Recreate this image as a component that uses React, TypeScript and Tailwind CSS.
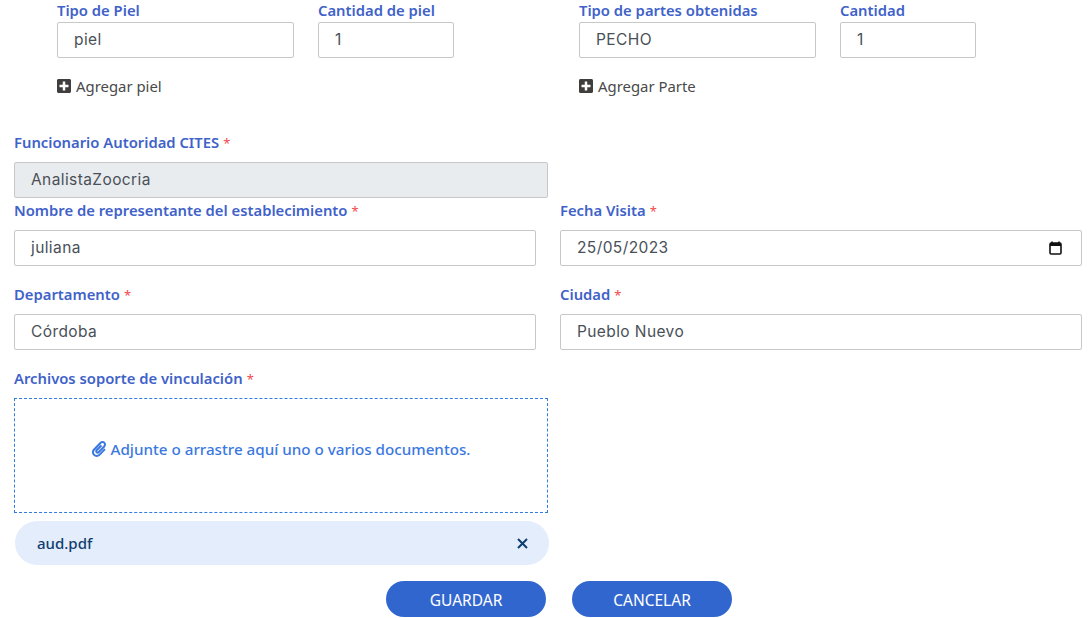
import { FaPaperclip, FaPlusSquare } from "react-icons/fa";

const labelFont = "block font-['Noto_Sans',sans-serif] text-[14.8px] font-semibold leading-5 text-[#3f62c9]";
const valueFont = "font-['Inter',sans-serif] text-[15.5px] tracking-[0.4px] text-[#495057]";

function Star() {
  return <span className="ml-1 text-[13px] font-normal leading-none text-[#f0484d]">*</span>;
}

function Box({ value, className = "", disabled = false, children }: { value: string; className?: string; disabled?: boolean; children?: React.ReactNode }) {
  return (
    <div
      className={`flex h-9 items-center justify-between rounded-[2px] border border-[#c8c8c8] pl-4 pr-[18px] ${valueFont} ${disabled ? "bg-[#e9ecef]" : "bg-white"} ${className}`}
    >
      <span>{value}</span>
      {children}
    </div>
  );
}

function Field({ label, value, children }: { label: string; value: string; children?: React.ReactNode }) {
  return (
    <div>
      <label className={`${labelFont} mb-[10px] mt-[2px]`}>
        {label}
        <Star />
      </label>
      <Box value={value}>{children}</Box>
    </div>
  );
}

function PairGroup({ first, firstValue, second, action }: { first: string; firstValue: string; second: string; action: string }) {
  return (
    <div className="w-[522px] shrink-0">
      <div className="flex gap-6">
        <div className="w-[237px]">
          <label className={`${labelFont} mb-[2px]`}>{first}</label>
          <Box value={firstValue} />
        </div>
        <div className="w-[136px]">
          <label className={`${labelFont} mb-[2px]`}>{second}</label>
          <Box value="1" />
        </div>
      </div>
      <div className="mt-[18px] flex h-5 items-center gap-1 font-['Noto_Sans',sans-serif] text-[14.9px] text-[#4a4a4a]">
        <FaPlusSquare size={16} className="-ml-px shrink-0 text-[#403d3d]" />
        <span>{action}</span>
      </div>
    </div>
  );
}

export default function App() {
  return (
    <div className="h-[618px] w-[1089px] overflow-hidden bg-white pl-[14px]">
      {/* partes obtenidas */}
      <div className="flex pl-[43px]">
        <PairGroup first="Tipo de Piel" firstValue="piel" second="Cantidad de piel" action="Agregar piel" />
        <PairGroup first="Tipo de partes obtenidas" firstValue="PECHO" second="Cantidad" action="Agregar Parte" />
      </div>

      <label className={`${labelFont} mt-[36px] mb-[10px]`}>
        Funcionario Autoridad CITES
        <Star />
      </label>
      <Box value="AnalistaZoocria" disabled className="w-[534px]" />

      <div className="grid w-[1068px] grid-cols-[522px_522px] gap-x-6 gap-y-4">
        <Field label="Nombre de representante del establecimiento" value="juliana" />
        <Field label="Fecha Visita" value="25/05/2023">
          <svg width="13" height="14" viewBox="0 0 13 14" className="mr-px">
            <path d="M3 .5v2M10 .5v2" stroke="#111" strokeWidth="1.6" />
            <rect x="1" y="2" width="11" height="11" rx="1.2" fill="none" stroke="#111" strokeWidth="1.6" />
            <rect x="1" y="2" width="11" height="3" fill="#111" />
          </svg>
        </Field>
        <Field label="Departamento" value="Córdoba" />
        <Field label="Ciudad" value="Pueblo Nuevo" />
      </div>

      <label className={`${labelFont} mt-[18px] mb-[10px]`}>
        Archivos soporte de vinculación
        <Star />
      </label>
      <div className="flex h-[115px] w-[534px] items-center justify-center gap-[3px] border border-dashed border-[#2f7de1] pb-[13px] font-['Noto_Sans',sans-serif] text-[15.2px] font-medium text-[#3b78e0]">
        <FaPaperclip size={16} className="shrink-0" />
        <span>Adjunte o arrastre aquí uno o varios documentos.</span>
      </div>

      <div className="ml-px mt-2 flex h-11 w-[534px] items-center justify-between rounded-[22px] bg-[#e4edfc] pl-[22px] pr-[21px] font-['Noto_Sans',sans-serif] text-[15px] font-medium text-[#0f3d6e]">
        <span>aud.pdf</span>
        <svg width="11" height="11" viewBox="0 0 11 11" stroke="#0f3d6e" strokeWidth="2">
          <path d="M1 1l9 9M10 1l-9 9" />
        </svg>
      </div>

      <div className="mt-4 flex gap-[26px] pl-[372px]">
        <button className="h-9 w-40 rounded-[18px] bg-[#3266cf] pt-[3px] font-['Noto_Sans',sans-serif] text-[15.5px] text-white">GUARDAR</button>
        <button className="h-9 w-40 rounded-[18px] bg-[#3266cf] pt-[3px] font-['Noto_Sans',sans-serif] text-[15.5px] text-white">CANCELAR</button>
      </div>
    </div>
  );
}
